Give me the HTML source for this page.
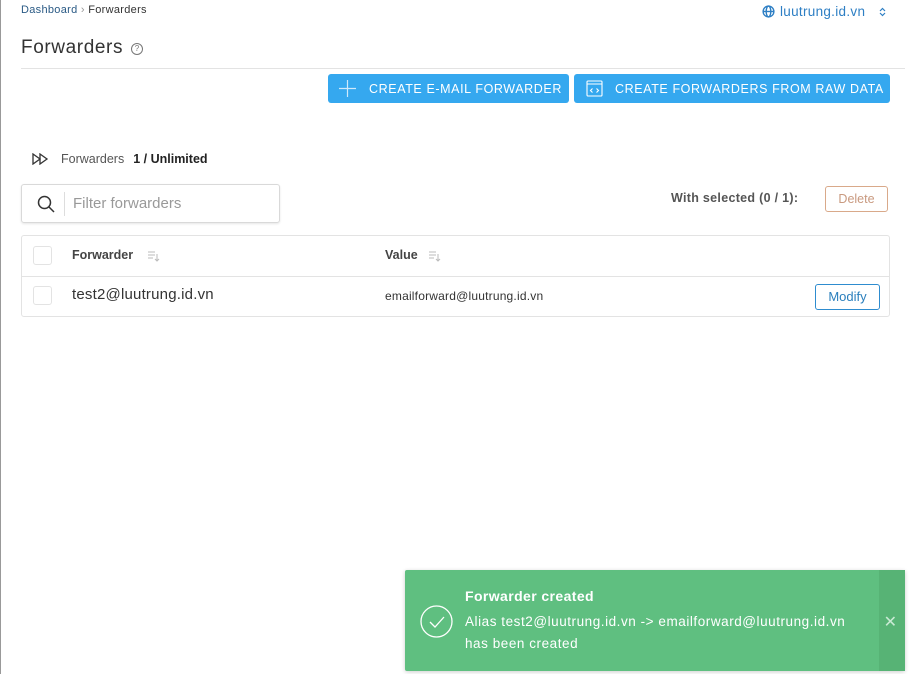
<!DOCTYPE html>
<html><head><meta charset="utf-8"><style>
*{box-sizing:border-box;margin:0;padding:0}
body{width:909px;height:674px;background:#fff;font-family:"Liberation Sans",sans-serif;position:relative;overflow:hidden;color:#333}
.a{position:absolute}
.btn{position:absolute;top:74px;height:29px;background:#35a8ef;border-radius:3px;color:#fff;font-size:12.5px;display:flex;align-items:center;letter-spacing:.6px}
.cb{position:absolute;width:19px;height:19px;border:1px solid #e3e3e3;border-radius:3px;background:#fff}
</style></head><body>
<div class="a" style="left:0;top:0;width:1px;height:674px;background:#999"></div>
<div class="a" style="left:21px;top:4px;font-size:11px;color:#2a5a85;letter-spacing:.3px">Dashboard <span style="color:#999">›</span> <span style="color:#333">Forwarders</span></div>
<div class="a" style="left:762px;top:4px;font-size:13.5px;color:#2e7fc4;display:flex;align-items:center;gap:5px;letter-spacing:.3px">
<svg width="13" height="13" viewBox="0 0 14 14" fill="none" stroke="#2e7fc4" stroke-width="1.5"><circle cx="7" cy="7" r="5.8"/><ellipse cx="7" cy="7" rx="2.5" ry="5.8"/><path d="M1.2 7h11.6"/></svg>luutrung.id.vn
<svg style="margin-left:9px" width="7" height="10" viewBox="0 0 7 10" fill="none" stroke="#2e7fc4" stroke-width="1.2"><path d="M1 4l2.5-2.5L6 4M1 6l2.5 2.5L6 6"/></svg></div>
<div class="a" style="left:21px;top:37px;font-size:19px;color:#333;letter-spacing:.6px">Forwarders <span style="display:inline-block;width:12px;height:12px;border:1px solid #777;border-radius:50%;font-size:8px;text-align:center;line-height:10px;vertical-align:2px;color:#777;letter-spacing:0;margin-left:2px">?</span></div>
<div class="a" style="left:21px;top:68px;width:884px;height:1px;background:#e3e3e3"></div>
<div class="btn" style="left:328px;width:241px"><svg style="margin:0 13px 0 11px" width="17" height="17" viewBox="0 0 17 17" stroke="#cfe9fb" stroke-width="1.2"><path d="M8.5 0v17M0 8.5h17"/></svg>CREATE E-MAIL FORWARDER</div>
<div class="btn" style="left:574px;width:316px"><svg style="margin:0 12px 0 12px" width="17" height="17" viewBox="0 0 17 17" fill="none" stroke="#fff" stroke-width="1.1"><rect x="1" y="1" width="15" height="15" rx="1"/><path d="M1 4h15M6.5 8.5l-2 2 2 2M10.5 8.5l2 2-2 2"/></svg>CREATE FORWARDERS FROM RAW DATA</div>
<div class="a" style="left:32px;top:152px;font-size:12.5px;color:#555;display:flex;align-items:center">
<svg width="18" height="12" viewBox="0 0 18 12" fill="none" stroke="#333" stroke-width="1.3"><path d="M1 1l7 5-7 5zM8 1l7 5-7 5z"/></svg>
<span style="margin-left:11px">Forwarders</span><b style="margin-left:9px;color:#222">1 / Unlimited</b></div>
<div class="a" style="left:21px;top:184px;width:259px;height:39px;border:1px solid #d9d9d9;border-radius:3px;box-shadow:0 1px 2px rgba(0,0,0,.1)">
<svg class="a" style="left:15px;top:10px" width="18" height="18" viewBox="0 0 18 18" fill="none" stroke="#333" stroke-width="1.5"><circle cx="7.5" cy="7.5" r="6"/><path d="M12 12l5 5"/></svg>
<div class="a" style="left:42px;top:7px;width:1px;height:24px;background:#ddd"></div>
<div class="a" style="left:51px;top:10px;font-size:15px;color:#999">Filter forwarders</div></div>
<div class="a" style="left:671px;top:191px;font-size:12.5px;font-weight:bold;color:#555;letter-spacing:.3px">With selected (0 / 1):</div>
<div class="a" style="left:825px;top:186px;width:63px;height:26px;border:1px solid #d9a98a;border-radius:3px;color:#c99a80;font-size:12.5px;text-align:center;line-height:24px">Delete</div>
<div class="a" style="left:21px;top:235px;width:869px;height:82px;border:1px solid #e3e3e3;border-radius:3px">
<div class="a" style="left:0;top:40px;width:867px;height:1px;background:#e3e3e3"></div>
<div class="cb" style="left:11px;top:10px"></div>
<div class="cb" style="left:11px;top:50px"></div>
<div class="a" style="left:50px;top:12px;font-size:12.5px;font-weight:bold;color:#444">Forwarder</div>
<svg class="a" style="left:126px;top:15px" width="12" height="11" viewBox="0 0 12 11" fill="none" stroke="#bbb" stroke-width="1"><path d="M0 1h7M0 4h7M0 7h5M9 3v7M7 8l2 2 2-2"/></svg>
<div class="a" style="left:363px;top:12px;font-size:12.5px;font-weight:bold;color:#444">Value</div>
<svg class="a" style="left:407px;top:15px" width="12" height="11" viewBox="0 0 12 11" fill="none" stroke="#bbb" stroke-width="1"><path d="M0 1h7M0 4h7M0 7h5M9 3v7M7 8l2 2 2-2"/></svg>
<div class="a" style="left:50px;top:50px;font-size:15px;color:#333;letter-spacing:.2px">test2@luutrung.id.vn</div>
<div class="a" style="left:363px;top:53px;font-size:12px;color:#333;letter-spacing:.2px">emailforward@luutrung.id.vn</div>
<div class="a" style="left:793px;top:48px;width:65px;height:26px;border:1px solid #2e8ccf;border-radius:3px;color:#2a7fbd;font-size:13px;text-align:center;line-height:24px">Modify</div>
</div>
<div class="a" style="left:405px;top:570px;width:500px;height:101px;background:#5fbf80;border-radius:2px;box-shadow:0 1px 4px rgba(0,0,0,.2);color:#fff">
<div class="a" style="right:0;top:0;width:26px;height:101px;background:#57b375"></div>
<div class="a" style="right:8px;top:42px;font-size:16px;color:#c9ead4">✕</div>
<svg class="a" style="left:15px;top:35px" width="33" height="33" viewBox="0 0 33 33" fill="none" stroke="#fff" stroke-width="1.3"><circle cx="16.5" cy="16.5" r="15.5"/><path d="M10 17l5 5 9-10"/></svg>
<div class="a" style="left:60px;top:18px;font-size:14px;font-weight:bold;letter-spacing:.4px">Forwarder created</div>
<div class="a" style="left:60px;top:41px;font-size:13.5px;line-height:22px;letter-spacing:.55px">Alias test2@luutrung.id.vn -&gt; emailforward@luutrung.id.vn<br>has been created</div>
</div>
</body></html>
